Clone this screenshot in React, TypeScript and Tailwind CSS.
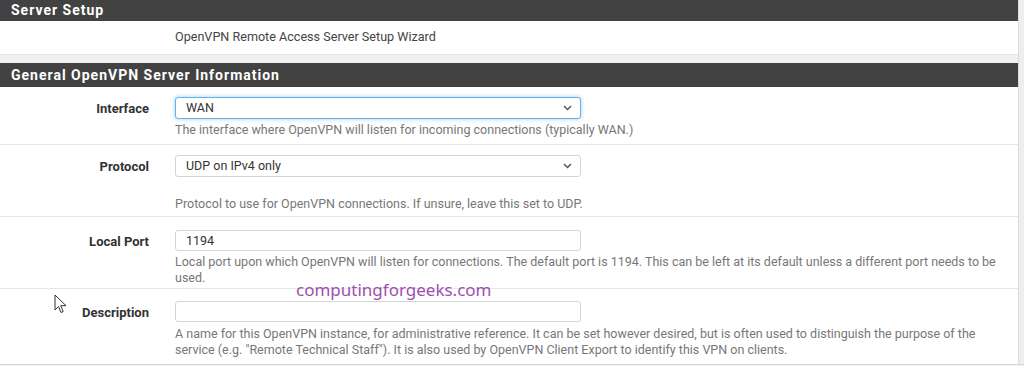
import React from 'react';

const Chevron: React.FC = () => (
  <svg width="9" height="6" viewBox="0 0 9 6" className="absolute right-[8px] top-1/2 -translate-y-1/2">
    <path d="M1 1l3.5 3.5L8 1" fill="none" stroke="#555" strokeWidth="1.5" />
  </svg>
);

interface RowProps {
  label: string;
  pad: string;
  children: React.ReactNode;
  last?: boolean;
}

const Row: React.FC<RowProps> = ({ label, pad, children, last }) => (
  <div className={`flex ${pad} ${last ? '' : 'border-b border-[#e6e6e6]'}`}>
    <div className="w-[150px] shrink-0 pr-[1px] pt-[2px] text-right text-[13px] font-bold text-[#333]">{label}</div>
    <div className="ml-[25px] w-[830px]">{children}</div>
  </div>
);

export default function App() {
  return (
    <div className="relative h-[366px] w-[1024px] overflow-hidden bg-[#eeeeee] font-['Roboto',sans-serif]">
      <div className="w-[1019px] border-r border-[#dcdcdc] bg-white">
        <div className="flex h-[21px] items-center bg-[#424242] pl-[11px] text-[14px] font-bold tracking-[1px] text-white">
          Server Setup
        </div>
        <div className="flex h-[33px] items-center pl-[175px] text-[12.6px] text-[#444]">
          OpenVPN Remote Access Server Setup Wizard
        </div>
        <div className="h-[9px] border-t border-[#e2e2e2] bg-[#f0f0f0]" />
        <div className="flex h-[24px] items-center bg-[#424242] pl-[11px] text-[14px] font-bold tracking-[1px] text-white">
          General OpenVPN Server Information
        </div>

        <Row label="Interface" pad="pt-[10px] pb-[6px]">
          <div className="relative h-[22px] w-[406px] rounded-[3px] border border-[#66afe9] bg-white pl-[10px] text-[12.5px] leading-[20px] text-[#333] shadow-[0_0_4px_rgba(102,175,233,0.6)]">
            WAN
            <Chevron />
          </div>
          <div className="mt-[3px] text-[12.5px] leading-[16px] text-[#777]">
            The interface where OpenVPN will listen for incoming connections (typically WAN.)
          </div>
        </Row>

        <Row label="Protocol" pad="pt-[10px] pb-[4px]">
          <div className="relative h-[22px] w-[406px] rounded-[3px] border border-[#d4d4d4] bg-white pl-[10px] text-[12.5px] leading-[20px] text-[#333]">
            UDP on IPv4 only
            <Chevron />
          </div>
          <div className="mt-[19px] text-[12.5px] leading-[16px] text-[#777]">
            Protocol to use for OpenVPN connections. If unsure, leave this set to UDP.
          </div>
        </Row>

        <Row label="Local Port" pad="pt-[13px] pb-[2px]">
          <div className="h-[21px] w-[406px] rounded-[3px] border border-[#d4d4d4] bg-white pl-[10px] text-[12.5px] leading-[19px] text-[#333]">
            1194
          </div>
          <div className="mt-[3px] text-[12.5px] leading-[16px] text-[#777]">
            Local port upon which OpenVPN will listen for connections. The default port is 1194. This can be left at its default unless a different port needs to be used.
          </div>
        </Row>

        <Row label="Description" pad="pt-[12px] pb-[6px]" last>
          <div className="h-[21px] w-[406px] rounded-[3px] border border-[#d4d4d4] bg-white" />
          <div className="mt-[4px] text-[12.5px] leading-[16px] text-[#777]">
            A name for this OpenVPN instance, for administrative reference. It can be set however desired, but is often used to distinguish the purpose of the service (e.g. "Remote Technical Staff"). It is also used by OpenVPN Client Export to identify this VPN on clients.
          </div>
        </Row>
      </div>
      <div className="h-[10px] border-t border-[#d8d8d8] bg-[#eeeeee]" />

      <div className="absolute left-[296px] top-[279px] font-['Noto_Sans',sans-serif] text-[17px] leading-[21px] text-[#9d4fae]">
        computingforgeeks.com
      </div>

      <svg className="absolute left-[54px] top-[294px]" width="14" height="21" viewBox="0 0 14 21">
        <path d="M1 1v15l3.5-3.5 2.5 6 2.2-1-2.5-5.8H12z" fill="white" stroke="#333" strokeWidth="1" strokeLinejoin="round" />
      </svg>
    </div>
  );
}
